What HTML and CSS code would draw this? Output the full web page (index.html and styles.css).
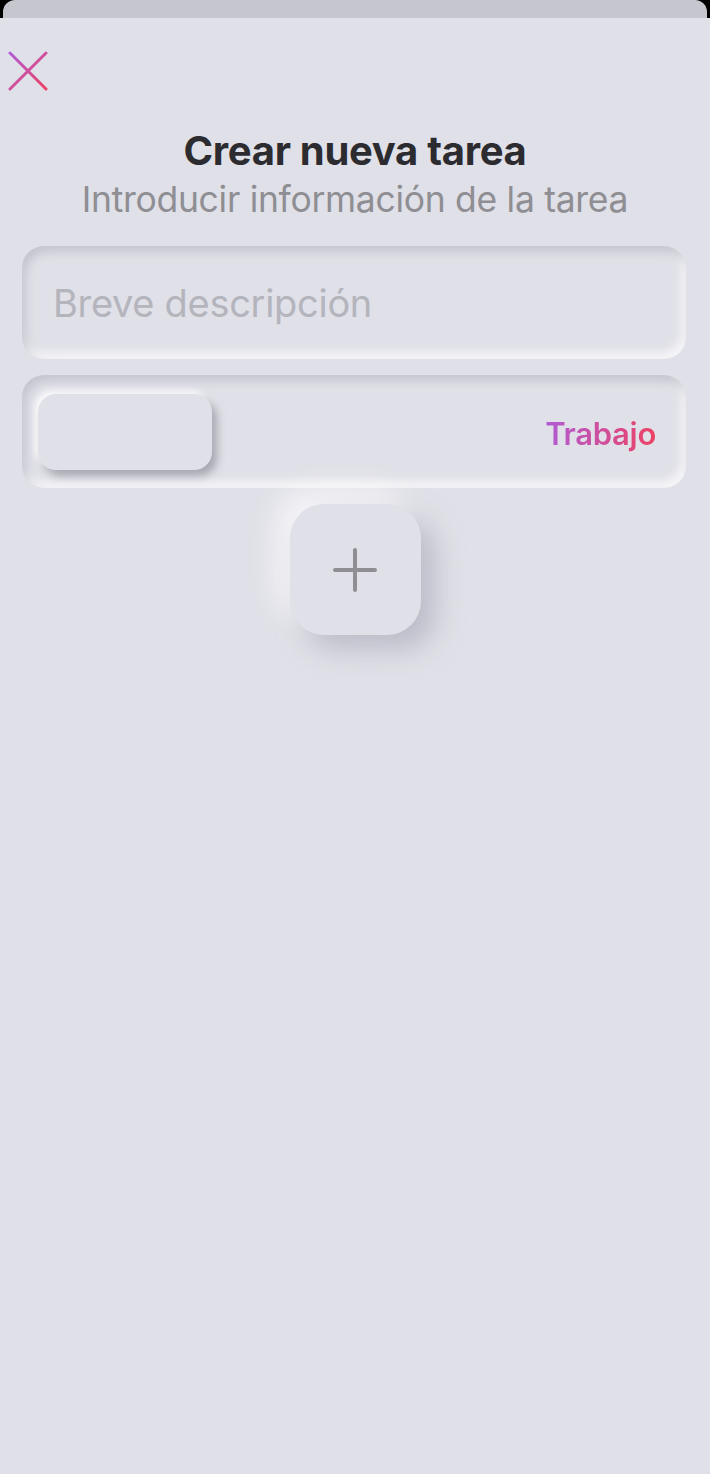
FILE: index.html
```html
<!DOCTYPE html>
<html lang="es">
  <head>
    <meta charset="UTF-8" />
    <meta name="viewport" content="width=device-width, initial-scale=1.0" />
    <title>Crear nueva tarea</title>
    <link rel="stylesheet" href="styles.css">
  </head>
  <body>
    <div class="backdrop">
      <div class="sheet-behind"></div>
    </div>
    <div class="sheet">
      <button class="close" aria-label="Cerrar">
        <svg width="40" height="40" viewBox="0 0 40 40">
          <defs>
            <linearGradient id="closeGrad" x1="0" y1="0" x2="1" y2="1">
              <stop offset="0" stop-color="#b05bd6" />
              <stop offset="1" stop-color="#ec4263" />
            </linearGradient>
          </defs>
          <path d="M2 2 L38 38 M38 2 L2 38" stroke="url(#closeGrad)" stroke-width="3" stroke-linecap="round" fill="none" />
        </svg>
      </button>

      <div class="header">
        <h1>Crear nueva tarea</h1>
        <p>Introducir información de la tarea</p>
      </div>

      <div class="field description">
        <input type="text" placeholder="Breve descripción" />
      </div>

      <div class="field toggle">
        <div class="knob"></div>
        <span class="category">Trabajo</span>
      </div>

      <div class="actions">
        <button class="add" aria-label="Añadir">
          <svg width="44" height="44" viewBox="0 0 44 44">
            <path d="M22 2 V42 M2 22 H42" stroke="#8e8e93" stroke-width="4" stroke-linecap="round" fill="none" />
          </svg>
        </button>
      </div>
    </div>
  </body>
</html>
```

FILE: styles.css
```css
/* Task sheet styles */
body {
  font-family: Inter, "Noto Sans", sans-serif;
  margin: 0;
  padding: 0;
  background-color: #000;
  height: 1474px;
  display: flex;
  flex-direction: column;
  overflow: hidden;
}

.backdrop {
  height: 18px;
  padding: 0 3px;
}

.sheet-behind {
  height: 100%;
  background-color: #c6c6ce;
  border-radius: 12px 12px 0 0;
}

.sheet {
  flex: 1;
  background-color: #e0e0e8;
  padding: 0 24px;
  display: flex;
  flex-direction: column;
}

.close {
  align-self: flex-start;
  background: none;
  border: none;
  padding: 0;
  margin: 33px 0 0 -16px;
  width: 40px;
  height: 40px;
  cursor: pointer;
}

.close svg {
  display: block;
}

.header {
  text-align: center;
  margin-top: 36px;
}

.header h1 {
  margin: 0;
  font-size: 40px;
  font-weight: 700;
  color: #2c2c30;
  letter-spacing: -0.3px;
  line-height: 48px;
}

.header p {
  margin: 3px 0 0;
  font-size: 35.5px;
  font-weight: 400;
  color: #8e8e93;
  letter-spacing: -0.3px;
  line-height: 44px;
}

.field {
  margin: 0 0 0 -2px;
  height: 113px;
  border-radius: 22px;
  background-color: #e0e0e8;
  box-shadow: inset 4px 6px 10px rgba(163, 163, 178, 0.45),
    inset -4px -6px 10px rgba(255, 255, 255, 0.75);
  display: flex;
  align-items: center;
}

.description {
  margin-top: 24px;
}

.field input {
  width: 100%;
  height: 100%;
  border: none;
  background: transparent;
  padding: 0 31px;
  font-family: inherit;
  font-size: 38px;
  color: #2c2c30;
  outline: none;
  box-sizing: border-box;
}

.field input::placeholder {
  color: #b4b4bc;
  letter-spacing: -0.3px;
}

.toggle {
  margin-top: 16px;
  padding: 3px 30px 0 16px;
  box-sizing: border-box;
  justify-content: space-between;
}

.knob {
  width: 174px;
  height: 76px;
  margin-top: -3px;
  border-radius: 18px;
  background-color: #e0e0e8;
  box-shadow: 5px 6px 8px rgba(120, 120, 132, 0.55),
    -3px -3px 6px rgba(255, 255, 255, 0.95);
}

.category {
  font-size: 31px;
  font-weight: 600;
  background: linear-gradient(90deg, #b05bd6, #ec4263);
  -webkit-background-clip: text;
  background-clip: text;
  color: transparent;
  letter-spacing: -0.3px;
}

.actions {
  display: flex;
  justify-content: center;
  margin-top: 16px;
}

.add {
  width: 131px;
  height: 131px;
  border-radius: 34px;
  border: none;
  background-color: #e0e0e8;
  box-shadow: 14px 14px 28px rgba(163, 163, 178, 0.6),
    -14px -14px 28px rgba(255, 255, 255, 0.7);
  display: flex;
  align-items: center;
  justify-content: center;
  cursor: pointer;
  padding: 0;
}
```
